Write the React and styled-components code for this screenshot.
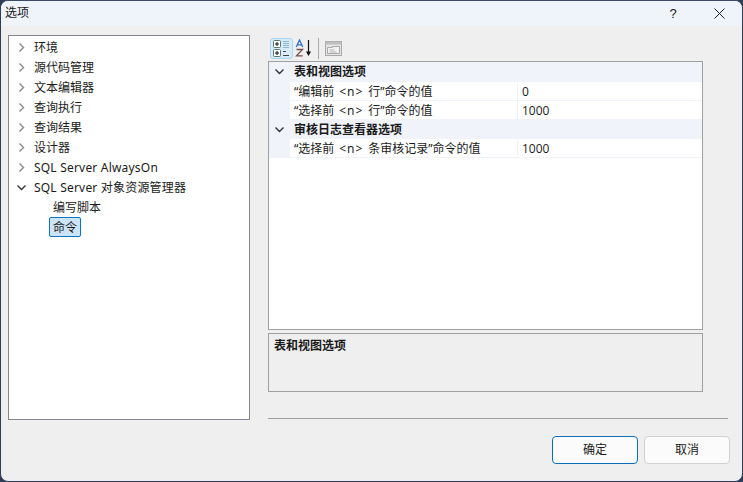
import React from "react";
import styled, { createGlobalStyle } from "styled-components";

const Global = createGlobalStyle`
  html, body { margin: 0; padding: 0; background: #2f3d58; }
  * { box-sizing: border-box; }
`;

const FONT = `"Noto Sans", "Noto Sans CJK SC", sans-serif`;

const Dialog = styled.div`
  width: 743px;
  height: 482px;
  display: flex;
  flex-direction: column;
  background: #efefef;
  border: 1px solid #2f3d58;
  border-top-color: #3b4a68;
  border-radius: 8px;
  overflow: hidden;
  font-family: ${FONT};
  font-size: 12px;
  color: #1a1a1a;
`;
const TitleBar = styled.div`
  height: 25px;
  flex: none;
  display: flex;
  align-items: center;
  background: #eff3fa;
  padding-left: 4px;
`;
const Title = styled.span`
  flex: 1;
  line-height: 20px;
  height: 22px;
`;
const TitleButton = styled.div`
  width: 46px;
  height: 25px;
  display: flex;
  align-items: center;
  justify-content: center;
  font-size: 13px;
  font-family: "Liberation Sans", sans-serif;
`;
const Body = styled.div`
  flex: 1;
  display: flex;
  padding: 9px 14px 0 7px;
  gap: 18px;
`;
const Tree = styled.div`
  width: 242px;
  height: 385px;
  flex: none;
  background: #fff;
  border: 1px solid #84868f;
  padding-top: 1px;
`;
const TreeRow = styled.div`
  height: 20px;
  display: flex;
  align-items: center;
  padding-left: ${({ $depth }) => ($depth ? "40px" : "5px")};
  white-space: nowrap;
`;
const Arrow = styled.span`
  width: 15px;
  height: 20px;
  flex: none;
  display: flex;
  align-items: center;
  justify-content: center;
  margin-right: 1px;
`;
const TreeLabel = styled.span`
  letter-spacing: ${({ $latin }) => ($latin ? "0.2px" : "0")};
  padding: 0 3px;
  height: 20px;
  line-height: 20px;
  border-radius: 2px;
  border: 1px solid ${({ $selected }) => ($selected ? "#0a74c9" : "transparent")};
  background: ${({ $selected }) => ($selected ? "#cce4f7" : "transparent")};
`;
const Right = styled.div`
  flex: 1;
  display: flex;
  flex-direction: column;
`;
const Toolbar = styled.div`
  height: 26px;
  flex: none;
  display: flex;
  align-items: center;
  padding: 0 0 0 2px;
`;
const ToolButton = styled.div`
  width: ${({ $wide }) => ($wide ? "23px" : "22px")};
  height: 21px;
  display: flex;
  align-items: center;
  justify-content: center;
  border-radius: 3px;
  border: 1px solid ${({ $active }) => ($active ? "#a8d4f5" : "transparent")};
  background: ${({ $active }) => ($active ? "#d6ebfb" : "transparent")};
`;
const ToolSep = styled.div`
  width: 1px;
  height: 21px;
  background: #a6a6a6;
  margin: 0 3px 0 3px;
`;
const Grid = styled.div`
  width: 435px;
  height: 269px;
  flex: none;
  background: #fff;
  border: 1px solid #a0a0a0;
`;
const CatRow = styled.div`
  height: 19.5px;
  display: flex;
  align-items: center;
  background: #f0f3fa;
  font-weight: 700;
  line-height: 21px;
`;
const CatToggle = styled.span`
  width: 25px;
  flex: none;
  display: flex;
  padding-left: 5px;
`;
const PropRow = styled.div`
  height: 19px;
  display: flex;
  border-left: 21px solid #f0f3fa;
  border-bottom: 1px solid #f0f3fa;
`;
const PropName = styled.div`
  width: 228px;
  flex: none;
  padding-left: 4px;
  line-height: 20px;
  border-right: 1px solid #f0f3fa;
  white-space: nowrap;
`;
const Token = styled.span`
  letter-spacing: 0.9px;
  margin: 0 5px;
`;
const PropValue = styled.div`
  flex: 1;
  padding-left: 4px;
  line-height: 20px;
  font-family: "Open Sans", sans-serif;
`;
const Description = styled.div`
  width: 435px;
  height: 59px;
  flex: none;
  margin-top: 3px;
  border: 1px solid #a0a0a0;
  padding: 2px 5px;
  font-weight: 700;
`;
const Rule = styled.div`
  height: 1px;
  flex: none;
  margin-top: 26px;
  background: #a0a0a0;
`;
const Footer = styled.div`
  display: flex;
  justify-content: flex-end;
  gap: 6px;
  margin-top: 17px;
  margin-right: -2px;
`;
const Button = styled.div`
  width: 86px;
  height: 28px;
  display: flex;
  align-items: center;
  justify-content: center;
  padding-bottom: 2px;
  background: #fbfbfb;
  border-radius: 4px;
  border: 1px solid ${({ $primary }) => ($primary ? "#0a6fbd" : "#d0d0d0")};
`;

const Chevron = ({ open, color }) => (
  <svg width="11" height="11" viewBox="0 0 11 11" fill="none" stroke={color} strokeWidth="1.4">
    {open ? <path d="M1.5 3.5 5.5 7.5 9.5 3.5" /> : <path d="M3.5 1.5 7.5 5.5 3.5 9.5" />}
  </svg>
);

const CategorizedIcon = () => (
  <svg width="17" height="17" viewBox="0 0 17 17">
    <rect x="0.5" y="0.5" width="7" height="7" rx="1" fill="#fff" stroke="#5a7a68" />
    <rect x="0.5" y="9.5" width="7" height="7" rx="1" fill="#fff" stroke="#5a7a68" />
    <path d="M2 4h4M4 2v4M2 13h4M4 11v4" stroke="#111" />
    <path d="M10 1.5h6M10 3.5h6M10 5.5h6M10 7.5h6" stroke="#8fb4d0" />
    <path d="M10 11.5h3M10 15.5h6" stroke="#444" />
  </svg>
);

const SortIcon = () => (
  <svg width="18" height="18" viewBox="0 0 18 18" fill="none">
    <path d="M1.2 8 4.5 1l3.3 7M2.4 5.8h4.2" stroke="#2f72c4" strokeWidth="1.3" />
    <path d="M1.5 10.5h6L1.5 16.8h6.3" stroke="#7a5050" strokeWidth="1.3" />
    <path d="M13.5 1v13" stroke="#111" strokeWidth="1.2" />
    <path d="M11 12.5 13.5 17 16 12.5Z" fill="#111" />
  </svg>
);

const PagesIcon = () => (
  <svg width="17" height="15" viewBox="0 0 17 15">
    <rect x="0.5" y="0.5" width="16" height="14" fill="#e4e4e4" stroke="#a9a9a9" />
    <rect x="0.5" y="0.5" width="16" height="3" fill="#bdbdbd" />
    <path d="M2.5 12.5V6.5H7.5V5.5H14.5V12.5Z" fill="#f2f2f2" stroke="#a9a9a9" />
    <path d="M4.5 9h5M4.5 11h7" stroke="#b5b5b5" />
  </svg>
);

const CloseIcon = () => (
  <svg width="11" height="11" viewBox="0 0 11 11" stroke="#222" strokeWidth="1">
    <path d="M0.5 0.5 10.5 10.5M10.5 0.5 0.5 10.5" />
  </svg>
);

const nodes = [
  { label: "环境" },
  { label: "源代码管理" },
  { label: "文本编辑器" },
  { label: "查询执行" },
  { label: "查询结果" },
  { label: "设计器" },
  { label: "SQL Server AlwaysOn", latin: true },
  { label: "SQL Server 对象资源管理器", latin: true, open: true },
];

export default function App() {
  return (
    <>
      <Global />
      <Dialog>
        <TitleBar>
          <Title>选项</Title>
          <TitleButton>?</TitleButton>
          <TitleButton>
            <CloseIcon />
          </TitleButton>
        </TitleBar>
        <Body>
          <Tree>
            {nodes.map((n) => (
              <TreeRow key={n.label}>
                <Arrow>
                  <Chevron open={n.open} color={n.open ? "#333" : "#8a8a8a"} />
                </Arrow>
                <TreeLabel $latin={n.latin}>{n.label}</TreeLabel>
              </TreeRow>
            ))}
            <TreeRow $depth>
              <TreeLabel>编写脚本</TreeLabel>
            </TreeRow>
            <TreeRow $depth>
              <TreeLabel $selected>命令</TreeLabel>
            </TreeRow>
          </Tree>
          <Right>
            <Toolbar>
              <ToolButton $active $wide>
                <CategorizedIcon />
              </ToolButton>
              <ToolButton>
                <SortIcon />
              </ToolButton>
              <ToolSep />
              <ToolButton>
                <PagesIcon />
              </ToolButton>
            </Toolbar>
            <Grid>
              <CatRow>
                <CatToggle>
                  <Chevron open color="#333" />
                </CatToggle>
                表和视图选项
              </CatRow>
              <PropRow>
                <PropName>“编辑前<Token>&lt;n&gt;</Token>行”命令的值</PropName>
                <PropValue>0</PropValue>
              </PropRow>
              <PropRow>
                <PropName>“选择前<Token>&lt;n&gt;</Token>行”命令的值</PropName>
                <PropValue>1000</PropValue>
              </PropRow>
              <CatRow>
                <CatToggle>
                  <Chevron open color="#333" />
                </CatToggle>
                审核日志查看器选项
              </CatRow>
              <PropRow>
                <PropName>“选择前<Token>&lt;n&gt;</Token>条审核记录”命令的值</PropName>
                <PropValue>1000</PropValue>
              </PropRow>
            </Grid>
            <Description>表和视图选项</Description>
            <Rule />
            <Footer>
              <Button $primary>确定</Button>
              <Button>取消</Button>
            </Footer>
          </Right>
        </Body>
      </Dialog>
    </>
  );
}
